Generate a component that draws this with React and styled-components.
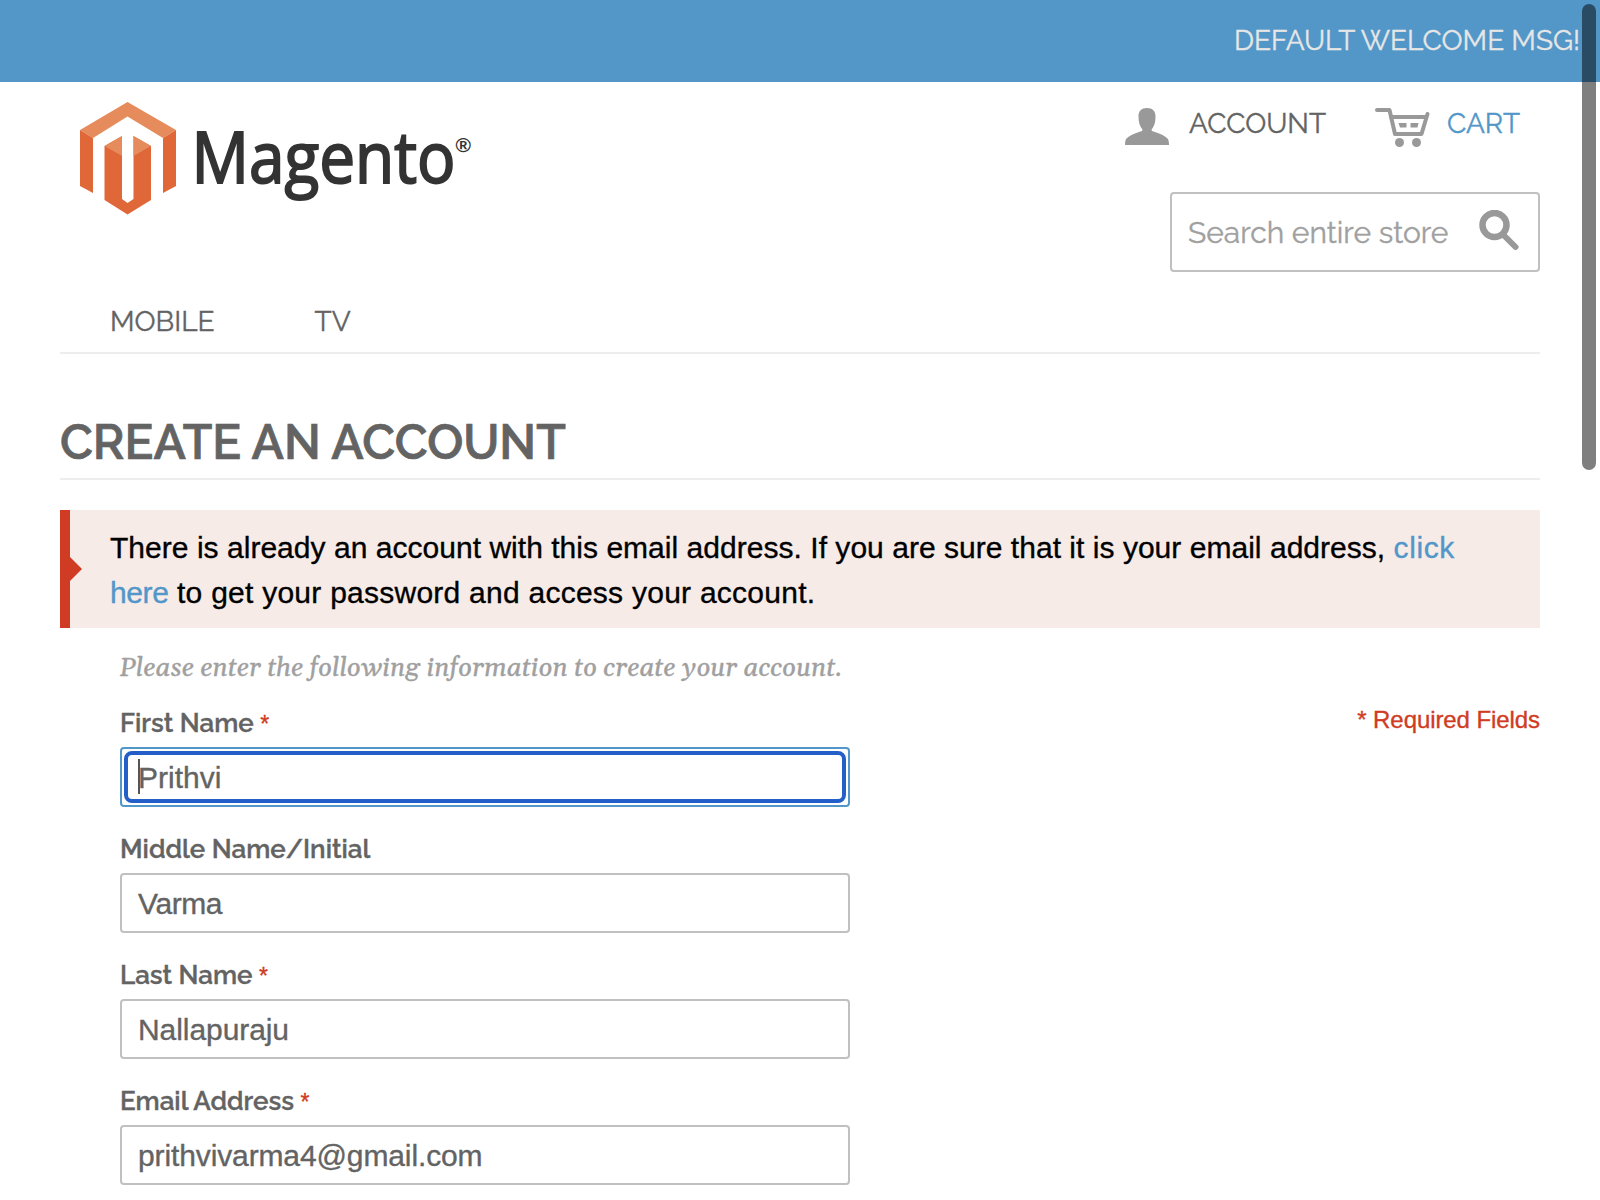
import React from 'react';
import styled, { createGlobalStyle } from 'styled-components';

const heading = 'Raleway, Lato, "Open Sans", sans-serif';
const body = '"Helvetica Neue", "Liberation Sans", Arial, sans-serif';

const GlobalStyle = createGlobalStyle`
  * { box-sizing: border-box; }
  body { margin: 0; background: #fff; overflow: hidden; }
`;

const Page = styled.div`
  position: relative;
  width: 1600px;
  height: 1200px;
  overflow: hidden;
  background: #fff;
  color: #636363;
  font-family: ${body};
  -webkit-text-stroke: 0.35px currentColor;
`;

const TopBar = styled.div`
  height: 82px;
  padding-right: 20px;
  background: #5297c8;
  color: #e6e6e6;
  font: 400 28px/82px ${heading};
  text-align: right;
  text-transform: uppercase;
`;

const Container = styled.div`
  margin: 0 60px;
`;

const Header = styled.header`
  display: flex;
  justify-content: space-between;
  height: 206px;
  padding-left: 18px;
`;

const Logo = styled.svg`
  width: 400px;
  height: 150px;
  margin-top: 8px;
  -webkit-text-stroke: 0;
`;

const Tools = styled.div`
  display: flex;
  flex-direction: column;
  align-items: flex-end;
`;

const Links = styled.div`
  display: flex;
  height: 110px;
  padding-right: 20px;
`;

const ToolLink = styled.a`
  display: flex;
  gap: ${(p) => p.$gap}px;
  margin-left: 49px;
  color: ${(p) => (p.$active ? '#5297c8' : '#636363')};
  font: 400 28px/84px ${heading};
  text-transform: uppercase;
`;

const LinkText = styled.span`
  width: ${(p) => p.$width}px;
  white-space: nowrap;
`;

const Icon = styled.svg`
  flex: none;
  margin-top: ${(p) => p.$top || 0}px;
`;

const Search = styled.div`
  display: flex;
  justify-content: space-between;
  width: 370px;
  height: 80px;
  padding: 0 19px 0 16px;
  border: 2px solid #c0c0c0;
  border-radius: 4px;
`;

const SearchInput = styled.input`
  width: 270px;
  height: 75px;
  padding: 1px 0 0;
  border: 0;
  outline: 0;
  background: none;
  font: 400 30px/74px ${heading};
  &::placeholder {
    color: #a0a0a0;
    opacity: 1;
    -webkit-text-stroke: 0.35px #a0a0a0;
  }
`;

const Nav = styled.nav`
  display: flex;
  gap: 100px;
  height: 66px;
  padding-left: 50px;
  border-bottom: 2px solid #ededed;
  font: 400 28px/68px ${heading};
  text-transform: uppercase;
`;

const Title = styled.h1`
  height: 78px;
  margin: 48px 0 30px;
  border-bottom: 2px solid #ededed;
  font: 600 48px/80px ${heading};
  text-transform: uppercase;
  -webkit-text-stroke: 0.7px currentColor;
`;

const Alert = styled.div`
  position: relative;
  height: 118px;
  padding: 15px 60px 0 40px;
  border-left: 10px solid #cf3c23;
  background: #f7ebe8;
  color: #000;
  font-size: 30px;
  line-height: 45px;
  &::before {
    content: '';
    position: absolute;
    left: 0;
    top: 47px;
    border: 12px solid transparent;
    border-left-color: #cf3c23;
    border-right-width: 0;
  }
`;

const Run = styled.span`
  letter-spacing: ${(p) => p.$spacing}px;
`;

const Anchor = styled.a`
  color: #5297c8;
  -webkit-text-stroke: 0.35px #5297c8;
`;

const Intro = styled.p`
  margin: 24px 0 22px 60px;
  color: #a0a0a0;
  font: italic 400 26px/33px Georgia, Gelasio, "Liberation Serif", serif;
`;

const Form = styled.form`
  display: flex;
  justify-content: space-between;
  padding-left: 60px;
`;

const Fields = styled.div`
  display: flex;
  flex-direction: column;
  gap: 26px;
  width: 730px;
`;

const Field = styled.div`
  position: relative;
`;

const Label = styled.label`
  display: block;
  height: 30px;
  margin-bottom: 10px;
  font: 600 26px/32px ${heading};
`;

const Star = styled.em`
  color: #cf3c23;
  font: 400 23px/1 ${body};
`;

const Input = styled.input`
  display: block;
  width: 730px;
  height: 60px;
  padding: 2px 16px 0;
  border: 2px solid ${(p) => (p.$focused ? '#5297c8' : '#c0c0c0')};
  border-radius: 4px;
  outline: none;
  color: #636363;
  font: 400 30px/54px ${body};
  letter-spacing: ${(p) => p.$spacing}px;
  -webkit-text-stroke: 0.35px #636363;
`;

const FocusRing = styled.span`
  position: absolute;
  left: 4px;
  right: 4px;
  bottom: 4px;
  height: 52px;
  border: 4px solid #245fc9;
  border-radius: 8px;
`;

const Caret = styled.span`
  position: absolute;
  left: 18px;
  bottom: 13px;
  width: 2px;
  height: 35px;
  background: #555;
`;

const Required = styled.p`
  margin: 0;
  color: #cf3c23;
  font-size: 24px;
  line-height: 26px;
  letter-spacing: -0.08px;
`;

const ScrollThumb = styled.div`
  position: absolute;
  top: 4px;
  left: 1582px;
  width: 14px;
  height: 466px;
  border-radius: 7px;
  background: rgba(0, 0, 0, 0.5);
`;

const MagentoLogo = () => (
  <Logo viewBox="78 90 400 150" role="img" aria-label="Magento">
    <path fill="#e68b5b" d="M80 130 127.500 102 176 130 163 138 127.500 116.500 93 138Z" />
    <path fill="#e06737" d="M80 130 93 138V193L80 186ZM176 130 163 138V193L176 186Z" />
    <path fill="#e06737" d="M104.500 146 122 136V199L127.500 203 133.500 199V136L151 146V200L127.500 214.500 104.500 200Z" />
    <path fill="#e68b5b" d="M104.500 146 122 136V156ZM151 146 133.500 136V156Z" />
    <text x="191.500" y="183" fontFamily="Open Sans, Noto Sans, sans-serif" fontSize="72" fontWeight="500" fill="#333" stroke="#333" strokeWidth="2" textLength="264" lengthAdjust="spacingAndGlyphs">Magento</text>
    <text x="455.500" y="152" fontFamily="Liberation Sans, sans-serif" fontSize="21" fontWeight="700" fill="#333">®</text>
  </Logo>
);

const PersonIcon = () => (
  <Icon $top={26} width="44" height="37" viewBox="0 0 44 37" fill="#999">
    <path d="M22 0C27.500 0 30.500 3 30.500 8C30.500 14 29.500 18 26.500 21.500C26.500 23 28 23.500 30 24C36 26 40 28 42.500 30.500Q44 32 44 37H0Q0 32 1.500 30.500C4 28 8 26 14 24C16 23.500 17.500 23 17.500 21.500C14.500 18 13.500 14 13.500 8C13.500 3 16.500 0 22 0Z" />
  </Icon>
);

const CartIcon = () => (
  <Icon $top={26} width="56" height="40" viewBox="0 0 56 40">
    <g fill="none" stroke="#999" strokeWidth="4" strokeLinecap="round" strokeLinejoin="round">
      <path d="M2 2H14.500L20 26H46.500L52.500 6" />
      <path d="M16 9H51" />
    </g>
    <path fill="#999" d="M23.500 15H31.500V19.500H25ZM35.500 15H43.500L42.500 19.500H35.500Z" />
    <circle cx="24.500" cy="34.500" r="4.500" fill="#999" />
    <circle cx="41.500" cy="34.500" r="4.500" fill="#999" />
  </Icon>
);

const SearchIcon = () => (
  <Icon $top={16} width="40" height="41" viewBox="0 0 40 41" fill="none" stroke="#999">
    <circle cx="15.500" cy="15" r="12" strokeWidth="6.500" />
    <path d="M25 25.500 36.500 37" strokeWidth="6" strokeLinecap="round" />
  </Icon>
);

const fields = [
  { label: 'First Name', value: 'Prithvi', required: true, focused: true, spacing: 0 },
  { label: 'Middle Name/Initial', value: 'Varma', spacing: -0.4 },
  { label: 'Last Name', value: 'Nallapuraju', required: true, spacing: -0.07 },
  { label: 'Email Address', value: 'prithvivarma4@gmail.com', required: true, spacing: -0.12 },
];

export default function App() {
  return (
    <Page>
      <GlobalStyle />
      <TopBar>Default welcome msg!</TopBar>
      <Container>
        <Header>
          <MagentoLogo />
          <Tools>
            <Links>
              <ToolLink $gap={20}>
                <PersonIcon />
                <LinkText $width={137}>Account</LinkText>
              </ToolLink>
              <ToolLink $gap={16} $active>
                <CartIcon />
                <LinkText $width={73}>Cart</LinkText>
              </ToolLink>
            </Links>
            <Search>
              <SearchInput placeholder="Search entire store" />
              <SearchIcon />
            </Search>
          </Tools>
        </Header>
        <Nav>
          <a>Mobile</a>
          <a>TV</a>
        </Nav>
        <Title>Create an account</Title>
        <Alert>
          <Run $spacing={0.03}>
            There is already an account with this email address. If you are sure that it is your email address,{' '}
          </Run>
          <Anchor>
            <Run $spacing={0.6}>click</Run> <Run $spacing={-0.4}>here</Run>
          </Anchor>
          <Run $spacing={0.25}> to get your password and access your account.</Run>
        </Alert>
        <Intro>Please enter the following information to create your account.</Intro>
        <Form>
          <Fields>
            {fields.map((f) => (
              <Field key={f.label}>
                <Label>
                  {f.label} {f.required && <Star>*</Star>}
                </Label>
                <Input readOnly value={f.value} $spacing={f.spacing} $focused={f.focused} />
                {f.focused && <FocusRing />}
                {f.focused && <Caret />}
              </Field>
            ))}
          </Fields>
          <Required>* Required Fields</Required>
        </Form>
      </Container>
      <ScrollThumb />
    </Page>
  );
}
